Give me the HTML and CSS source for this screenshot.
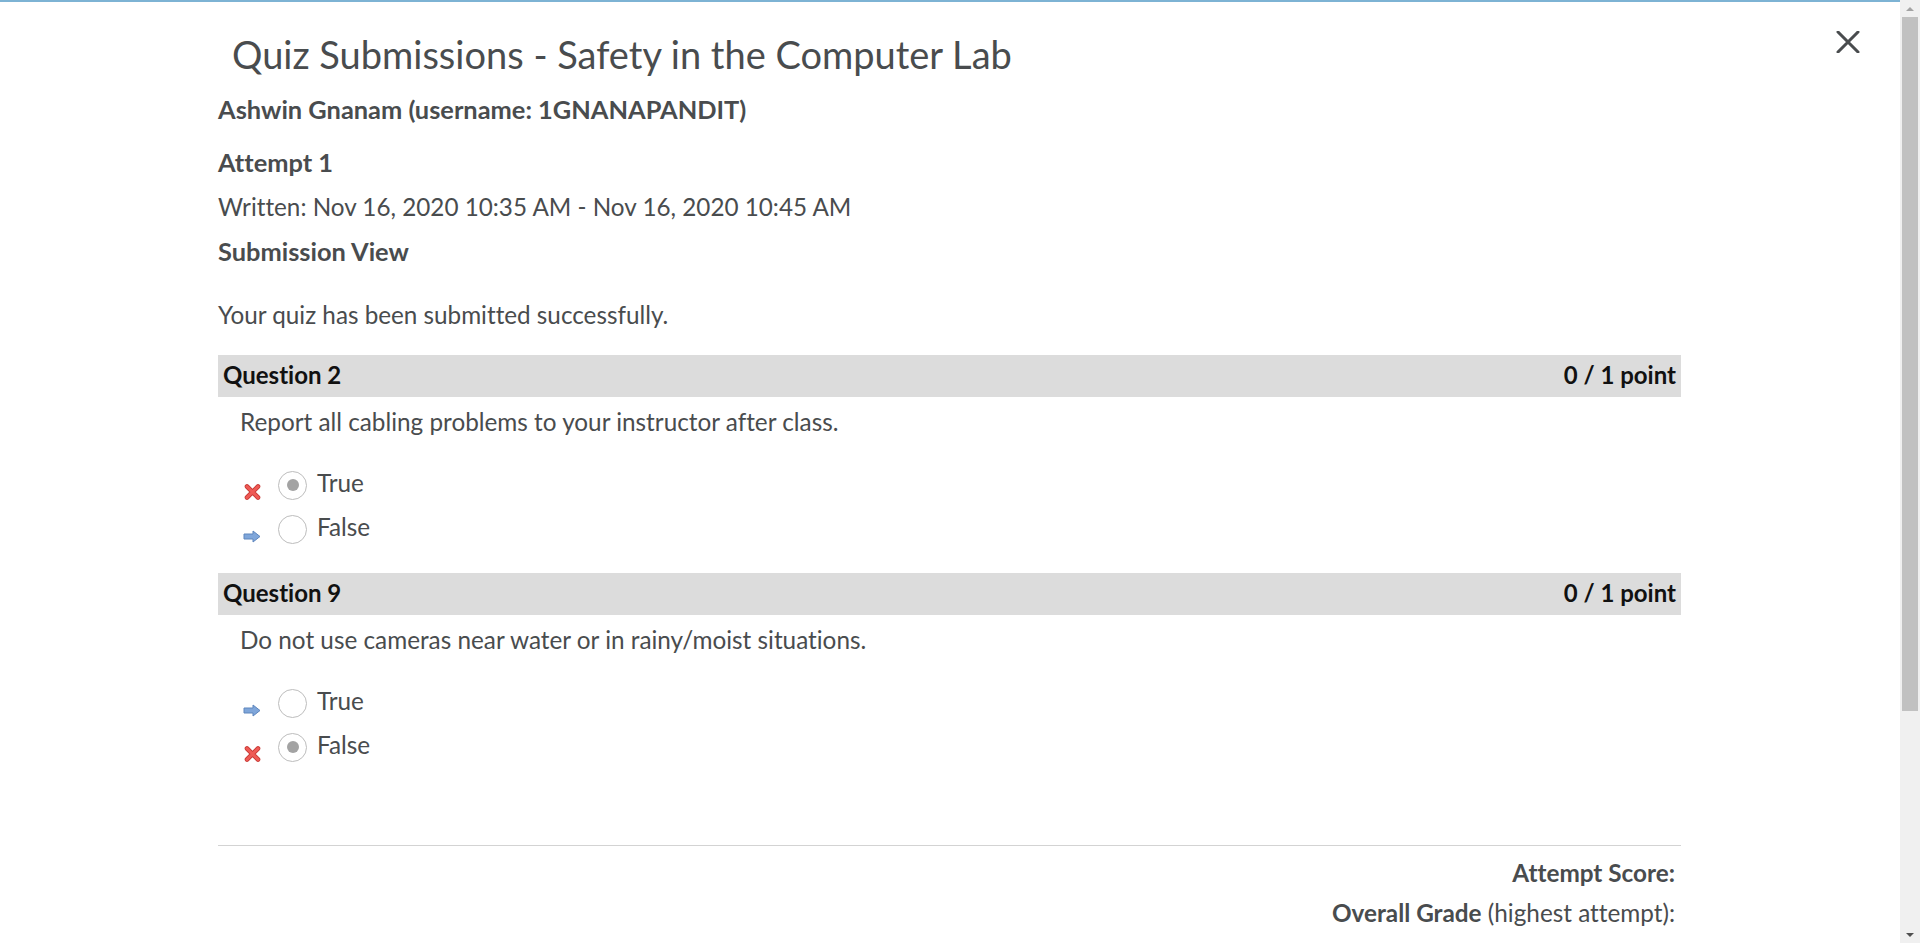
FILE: index.html
```html
<!DOCTYPE html>
<html lang="en">
<head>
<meta charset="utf-8">
<title>Quiz Submissions - Safety in the Computer Lab</title>
<link rel="stylesheet" href="styles.css">
</head>
<body>
<div class="page">
  <div class="viewport">
    <div class="topline"></div>
    <button class="close" aria-label="Close">
      <svg width="24" height="22" viewBox="0 0 24 22"><path d="M2 1 L22 21 M22 1 L2 21" stroke="#494c4e" stroke-width="3" stroke-linecap="round" fill="none"/></svg>
    </button>
    <main class="content">
      <h1 class="title">Quiz Submissions - Safety in the Computer Lab</h1>
      <h2 class="user">Ashwin Gnanam (username: 1GNANAPANDIT)</h2>
      <h3 class="attempt">Attempt 1</h3>
      <p class="written">Written: Nov 16, 2020 10:35 AM - Nov 16, 2020 10:45 AM</p>
      <h3 class="view">Submission View</h3>
      <p class="success">Your quiz has been submitted successfully.</p>

      <section class="question">
        <div class="qhead"><span>Question 2</span><span>0 / 1 point</span></div>
        <p class="qtext">Report all cabling problems to your instructor after class.</p>
        <ul class="answers">
          <li class="answer">
            <span class="mark mark-wrong"><svg width="17" height="16" viewBox="0 0 17 16"><path d="M3 2.5 L14 13.5 M14 2.5 L3 13.5" stroke="#c93a36" stroke-width="4.6" stroke-linecap="round"/><path d="M3 2.5 L14 13.5 M14 2.5 L3 13.5" stroke="#ef5a55" stroke-width="3" stroke-linecap="round"/></svg></span>
            <span class="radio checked"></span>
            <span class="label">True</span>
          </li>
          <li class="answer">
            <span class="mark mark-arrow"><svg width="18" height="13" viewBox="0 0 18 13"><path d="M1 4 H10 V1 L17 6.5 L10 12 V9 H1 Z" fill="#7fa6da" stroke="#5e86bd" stroke-width="1" stroke-linejoin="round"/></svg></span>
            <span class="radio"></span>
            <span class="label">False</span>
          </li>
        </ul>
      </section>

      <section class="question">
        <div class="qhead"><span>Question 9</span><span>0 / 1 point</span></div>
        <p class="qtext">Do not use cameras near water or in rainy/moist situations.</p>
        <ul class="answers">
          <li class="answer">
            <span class="mark mark-arrow"><svg width="18" height="13" viewBox="0 0 18 13"><path d="M1 4 H10 V1 L17 6.5 L10 12 V9 H1 Z" fill="#7fa6da" stroke="#5e86bd" stroke-width="1" stroke-linejoin="round"/></svg></span>
            <span class="radio"></span>
            <span class="label">True</span>
          </li>
          <li class="answer">
            <span class="mark mark-wrong"><svg width="17" height="16" viewBox="0 0 17 16"><path d="M3 2.5 L14 13.5 M14 2.5 L3 13.5" stroke="#c93a36" stroke-width="4.6" stroke-linecap="round"/><path d="M3 2.5 L14 13.5 M14 2.5 L3 13.5" stroke="#ef5a55" stroke-width="3" stroke-linecap="round"/></svg></span>
            <span class="radio checked"></span>
            <span class="label">False</span>
          </li>
        </ul>
      </section>

      <hr class="divider">
      <div class="score"><strong>Attempt Score:</strong></div>
      <div class="score score-grade"><strong>Overall Grade</strong> (highest attempt):</div>
    </main>
  </div>
  <div class="scrollbar">
    <div class="sb-arrow sb-up"></div>
    <div class="sb-track">
      <div class="sb-thumb"></div>
    </div>
    <div class="sb-arrow sb-down"></div>
  </div>
</div>
</body>
</html>
```
FILE: styles.css
```css
html, body {
  margin: 0;
  padding: 0;
  height: 100%;
  overflow: hidden;
  background: #ffffff;
}
body {
  font-family: Lato, "Open Sans", "Liberation Sans", sans-serif;
  font-variant-ligatures: none;
  color: #494c4e;
}
.page {
  display: flex;
  height: 943px;
  width: 1920px;
}
.viewport {
  position: relative;
  flex: 1;
  overflow: hidden;
}
.topline {
  height: 2px;
  background: #7db3d4;
}
.close {
  position: absolute;
  top: 31px;
  left: 1836px;
  width: 24px;
  height: 22px;
  padding: 0;
  border: 0;
  background: transparent;
  display: flex;
}
.content {
  margin-left: 218px;
  width: 1463px;
}
.title {
  margin: 30px 0 0 14px;
  font-size: 38px;
  line-height: 44px;
  font-weight: 400;
  color: #494c4e;
}
.user, .attempt, .view {
  font-size: 25.4px;
  line-height: 30px;
  font-weight: 700;
  color: #494c4e;
}
.user { margin: 18px 0 0; }
.attempt { margin: 23px 0 0; }
.view { margin: 14px 0 0; }
.written, .success {
  font-size: 24.25px;
  line-height: 30px;
  margin: 15px 0 0;
}
.success { margin-top: 34px; }
.question { margin-top: 25px; }
.question + .question { margin-top: 26px; }
.qhead {
  box-sizing: border-box;
  display: flex;
  justify-content: space-between;
  align-items: center;
  height: 42px;
  padding: 0 5px 4px;
  background: #dcdcdc;
  font-size: 24px;
  font-weight: 700;
  color: #111;
}
.qtext {
  margin: 10px 0 0;
  padding-left: 22px;
  font-size: 24.3px;
  line-height: 30px;
}
.answers {
  list-style: none;
  margin: 30px 0 0;
  padding: 0 0 0 25px;
  display: flex;
  flex-direction: column;
  gap: 8px;
}
.answer {
  display: flex;
  align-items: center;
  height: 36px;
  font-size: 24.3px;
}
.mark {
  width: 18px;
  display: flex;
  justify-content: center;
  margin-right: 17px;
}
.mark-wrong { margin-top: 14px; }
.mark-arrow { margin-top: 14px; }
.radio {
  box-sizing: border-box;
  width: 29px;
  height: 29px;
  border: 1px solid #bdbdbd;
  border-radius: 50%;
  background: #fff;
  display: flex;
  align-items: center;
  justify-content: center;
  margin-right: 10px;
}
.radio.checked::after {
  content: "";
  width: 12px;
  height: 12px;
  border-radius: 50%;
  background: #a3a3a3;
}
.label {
  line-height: 30px;
  margin-top: -5px;
}
.divider {
  margin: 80px 0 0;
  border: 0;
  border-top: 1px solid #d3d3d3;
  height: 0;
}
.score {
  margin-top: 12px;
  padding-right: 6px;
  text-align: right;
  font-size: 24.3px;
  line-height: 30px;
}
.score-grade { margin-top: 10px; }
.score strong { font-weight: 700; }
.scrollbar {
  width: 20px;
  flex: none;
  display: flex;
  flex-direction: column;
  background: #f0f0f0;
}
.sb-arrow {
  height: 17px;
  flex: none;
  display: flex;
  align-items: center;
  justify-content: center;
}
.sb-up::before {
  content: "";
  border-left: 4px solid transparent;
  border-right: 4px solid transparent;
  border-bottom: 4px solid #a3a3a3;
}
.sb-down::before {
  content: "";
  border-left: 4px solid transparent;
  border-right: 4px solid transparent;
  border-top: 4px solid #505050;
}
.sb-track {
  flex: 1;
  padding: 0 2px;
}
.sb-thumb {
  height: 694px;
  background: #c1c1c1;
}
```
